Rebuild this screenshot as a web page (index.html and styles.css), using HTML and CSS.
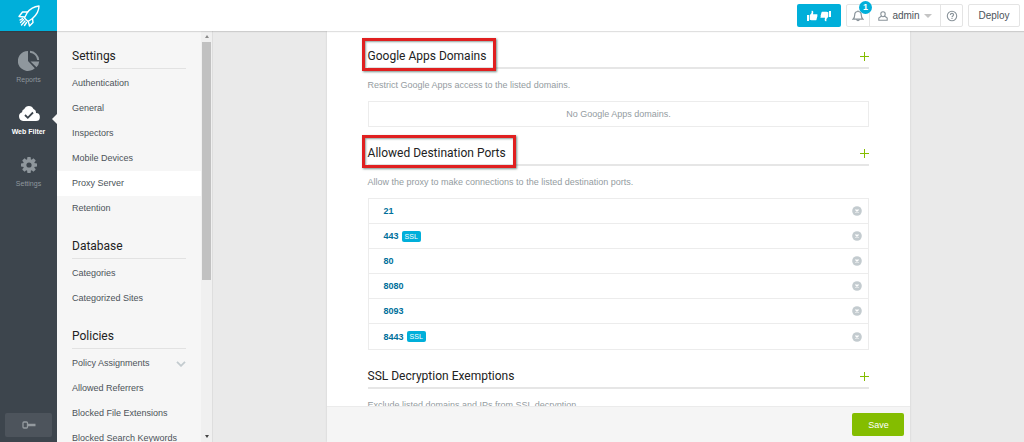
FILE: index.html
```html
<!DOCTYPE html>
<html lang="en">
<head>
  <meta charset="UTF-8">
  <title>Proxy Server</title>
  <link rel="stylesheet" href="styles.css">
</head>
<body>
  <header class="topbar">
    <a href="#" class="logo" aria-label="Home">
      <svg width="24" height="24" viewBox="0 0 24 24" fill="none" stroke="#fff" stroke-width="1.400" stroke-linejoin="round" stroke-linecap="round">
        <path d="M22 2C16 2.500 12.500 5.500 10 9l-2.500 5 3.500 3.500 4.500-3C19.500 11 22 8 22 2z"/>
        <path d="M10.500 8L5.500 8 2 12.500l5.500.5M15.500 14.500l.5 4-3.500 3.500-1.200-4.500"/>
        <path d="M6.500 15.500L3.500 18.500M8 17l-3.500 4M9.500 18.500L7.500 21.500M5.500 14.500L3 16"/>
      </svg>
    </a>
    <div class="tools">
      <button class="feedback" aria-label="Feedback">
        <svg width="12" height="12" viewBox="0 0 12 12" fill="#fff"><path d="M1 5h2v6H1zM3.700 5.200L5.600 3V.8c1.400-.5 2 .8 1.600 2.200L7 4.200h3.800c1 0 1 1.300.3 1.600.5.500.3 1.300-.2 1.500.4.600.1 1.200-.4 1.400.3.900-.2 1.600-1 1.600H5.500l-1.800-.6z"/></svg>
        <svg width="12" height="12" viewBox="0 0 12 12" fill="#fff"><path d="M11 7H9V1h2zM8.300 6.800L6.400 9v2.200c-1.400.5-2-.8-1.600-2.200L5 7.800H1.200c-1 0-1-1.300-.3-1.600-.5-.5-.3-1.300.2-1.500-.4-.6-.1-1.200.4-1.400-.3-.9.2-1.600 1-1.600h4l1.800.6z"/></svg>
      </button>
      <div class="group">
        <button class="bell" aria-label="Notifications">
          <svg width="12" height="12" viewBox="0 0 12 12" fill="none" stroke="#8a949b" stroke-width="1.200"><path d="M6 .5v1M1 9.200h10C9.500 8 9.300 7 9.300 5c0-2.200-1.300-3.500-3.300-3.500S2.700 2.800 2.700 5c0 2-.2 3-1.700 4.200zM4.700 9.500c.2 1.600 2.400 1.600 2.600 0"/></svg>
          <span class="badge">1</span>
        </button>
        <button class="user">
          <svg width="10" height="10" viewBox="0 0 10 10" fill="none" stroke="#8a949b" stroke-width="1.100"><path d="M5 .8c1.500 0 2.200 1 2.200 2.300S6.300 5.700 5 5.700 2.800 4.400 2.800 3.100 3.500.8 5 .8zM3.200 5.300L.8 7v2.200h8.400V7L6.800 5.300"/></svg>
          <span>admin</span>
          <span class="caret"></span>
        </button>
        <button class="help" aria-label="Help">
          <svg width="12" height="12" viewBox="0 0 12 12" fill="none" stroke="#8a949b" stroke-width="1.100"><circle cx="6" cy="6" r="4.700"/><path d="M4.400 4.900c0-2 3.200-2 3.200-.1C7.600 6 6 5.900 6 7.200M6 8v1"/></svg>
        </button>
      </div>
      <button class="deploy">Deploy</button>
    </div>
  </header>

  <div class="layout">
    <nav class="rail">
      <a href="#" class="rail-item">
        <svg width="22" height="22" viewBox="0 0 22 22" fill="#8f979d"><path d="M10 1a10 10 0 1 0 6.800 17.200L10 11z"/><path d="M12 .8A10 10 0 0 1 21.200 10h-2A8 8 0 0 0 12 2.800zM12.500 11.500h8.700a9 9 0 0 1-2.700 5.800z"/></svg>
        <span>Reports</span>
      </a>
      <a href="#" class="rail-item active">
        <svg width="22" height="22" viewBox="0 0 22 22"><path fill="#fff" d="M5 19a4.500 4.500 0 0 1-1-8.700A3.500 3.500 0 0 1 6.300 7 5 5 0 0 1 15.500 7a4 4 0 0 1 2.500 4 4 4 0 0 1-.3 8z"/><path fill="none" stroke="#3d454d" stroke-width="1.800" d="M7 13l2.800 2.800L15 10.500"/></svg>
        <span>Web Filter</span>
      </a>
      <a href="#" class="rail-item">
        <svg width="22" height="22" viewBox="0 0 22 22"><g fill="#8f979d"><rect x="9.200" y="3" width="3.600" height="16" rx=".8"/><rect x="9.200" y="3" width="3.600" height="16" rx=".8" transform="rotate(45 11 11)"/><rect x="9.200" y="3" width="3.600" height="16" rx=".8" transform="rotate(90 11 11)"/><rect x="9.200" y="3" width="3.600" height="16" rx=".8" transform="rotate(135 11 11)"/><circle cx="11" cy="11" r="6"/></g><circle cx="11" cy="11" r="2.600" fill="#3d454d"/></svg>
        <span>Settings</span>
      </a>
      <button class="key" aria-label="License key">
        <svg width="14" height="8" viewBox="0 0 14 8" fill="none" stroke="#949a9f" stroke-width="1.300"><rect x="1" y="1" width="4.500" height="6" rx="1"/><path stroke-width="2.500" d="M6 4h7.500"/></svg>
      </button>
    </nav>

    <aside class="sidebar">
      <div class="menu">
        <h3>Settings</h3>
        <ul>
          <li><a href="#">Authentication</a></li>
          <li><a href="#">General</a></li>
          <li><a href="#">Inspectors</a></li>
          <li><a href="#">Mobile Devices</a></li>
          <li><a href="#" class="current">Proxy Server</a></li>
          <li><a href="#">Retention</a></li>
        </ul>
        <h3>Database</h3>
        <ul>
          <li><a href="#">Categories</a></li>
          <li><a href="#">Categorized Sites</a></li>
        </ul>
        <h3>Policies</h3>
        <ul>
          <li><a href="#">Policy Assignments
            <svg width="10" height="6" viewBox="0 0 10 6" fill="none" stroke="#c3cbcf" stroke-width="1.800"><path d="M1 .8l4 4 4-4"/></svg></a></li>
          <li><a href="#">Allowed Referrers</a></li>
          <li><a href="#">Blocked File Extensions</a></li>
          <li><a href="#">Blocked Search Keywords</a></li>
        </ul>
      </div>
      <div class="scrollbar">
        <span class="up"></span>
        <span class="thumb"></span>
        <span class="down"></span>
      </div>
    </aside>

    <main class="main">
      <div class="panel">
        <div class="content">
          <section>
            <div class="title">
              <h2><span class="marked">Google Apps Domains</span></h2>
              <button class="add" aria-label="Add domain"></button>
            </div>
            <p>Restrict Google Apps access to the listed domains.</p>
            <div class="empty">No Google Apps domains.</div>
          </section>

          <section>
            <div class="title">
              <h2><span class="marked">Allowed Destination Ports</span></h2>
              <button class="add" aria-label="Add port"></button>
            </div>
            <p>Allow the proxy to make connections to the listed destination ports.</p>
            <ul class="ports">
              <li><a href="#">21</a><button class="remove" aria-label="Remove"><svg width="10" height="10" viewBox="0 0 10 10"><circle cx="5" cy="5" r="4.800" fill="#c3cbcf"/><path stroke="#fff" stroke-width="1.300" d="M3.500 3.500l3 3M6.500 3.500l-3 3"/></svg></button></li>
              <li><a href="#">443</a><span class="ssl">SSL</span><button class="remove" aria-label="Remove"><svg width="10" height="10" viewBox="0 0 10 10"><circle cx="5" cy="5" r="4.800" fill="#c3cbcf"/><path stroke="#fff" stroke-width="1.300" d="M3.500 3.500l3 3M6.500 3.500l-3 3"/></svg></button></li>
              <li><a href="#">80</a><button class="remove" aria-label="Remove"><svg width="10" height="10" viewBox="0 0 10 10"><circle cx="5" cy="5" r="4.800" fill="#c3cbcf"/><path stroke="#fff" stroke-width="1.300" d="M3.500 3.500l3 3M6.500 3.500l-3 3"/></svg></button></li>
              <li><a href="#">8080</a><button class="remove" aria-label="Remove"><svg width="10" height="10" viewBox="0 0 10 10"><circle cx="5" cy="5" r="4.800" fill="#c3cbcf"/><path stroke="#fff" stroke-width="1.300" d="M3.500 3.500l3 3M6.500 3.500l-3 3"/></svg></button></li>
              <li><a href="#">8093</a><button class="remove" aria-label="Remove"><svg width="10" height="10" viewBox="0 0 10 10"><circle cx="5" cy="5" r="4.800" fill="#c3cbcf"/><path stroke="#fff" stroke-width="1.300" d="M3.500 3.500l3 3M6.500 3.500l-3 3"/></svg></button></li>
              <li><a href="#">8443</a><span class="ssl">SSL</span><button class="remove" aria-label="Remove"><svg width="10" height="10" viewBox="0 0 10 10"><circle cx="5" cy="5" r="4.800" fill="#c3cbcf"/><path stroke="#fff" stroke-width="1.300" d="M3.500 3.500l3 3M6.500 3.500l-3 3"/></svg></button></li>
            </ul>
          </section>

          <section>
            <div class="title">
              <h2>SSL Decryption Exemptions</h2>
              <button class="add" aria-label="Add exemption"></button>
            </div>
            <p>Exclude listed domains and IPs from SSL decryption.</p>
          </section>
        </div>
        <footer class="actions">
          <button class="save">Save</button>
        </footer>
      </div>
    </main>
  </div>
</body>
</html>
```

FILE: styles.css
```css
* {
  box-sizing: border-box;
}

body {
  margin: 0;
  height: 100vh;
  display: flex;
  flex-direction: column;
  overflow: hidden;
  font-family: "Liberation Sans", Arial, sans-serif;
  font-size: 9px;
  color: #4c5359;
  background: #eaeaea;
}

h2, h3, p, ul {
  margin: 0;
  padding: 0;
}

ul {
  list-style: none;
}

a {
  color: inherit;
  text-decoration: none;
}

button {
  display: flex;
  align-items: center;
  justify-content: center;
  padding: 0;
  border: none;
  background: none;
  font: inherit;
  color: inherit;
  cursor: pointer;
}

/* top bar */
.topbar {
  position: relative;
  z-index: 2;
  display: flex;
  justify-content: space-between;
  flex-shrink: 0;
  height: 31px;
  background: #fff;
  box-shadow: 0 1px 1px rgba(0, 0, 0, 0.12);
}

.logo {
  display: flex;
  align-items: center;
  justify-content: center;
  width: 57px;
  height: 31px;
  background: #00afda;
}

.tools {
  display: flex;
  align-items: center;
  gap: 5px;
  padding-right: 4px;
  font-size: 10px;
}

.feedback {
  gap: 2px;
  width: 44px;
  height: 23px;
  border-radius: 2px;
  background: #00afda;
}

.group {
  display: flex;
  height: 23px;
  border: 1px solid #e4e4e4;
  border-radius: 2px;
}

.bell {
  position: relative;
  width: 22px;
}

.badge {
  position: absolute;
  top: -4px;
  right: -3px;
  width: 13px;
  border-radius: 7px;
  background: #00afda;
  color: #fff;
  font-size: 9px;
  font-weight: bold;
  line-height: 13px;
  text-align: center;
}

.user {
  gap: 4px;
  width: 72px;
  border-left: 1px solid #e4e4e4;
  border-right: 1px solid #e4e4e4;
}

.caret {
  border: 4px solid transparent;
  border-top-color: #c4c4c4;
  border-bottom: none;
}

.help {
  width: 21px;
}

.deploy {
  width: 52px;
  height: 23px;
  border: 1px solid #e4e4e4;
  border-radius: 2px;
}

.layout {
  display: flex;
  flex: 1;
  min-height: 0;
}

/* icon rail */
.rail {
  display: flex;
  flex-direction: column;
  align-items: center;
  width: 57px;
  padding: 19px 0 5px;
  background: #3d454d;
}

.rail-item {
  position: relative;
  display: flex;
  flex-direction: column;
  align-items: center;
  gap: 3px;
  width: 100%;
  height: 52px;
  font-size: 7px;
  line-height: 10px;
  color: #8f979d;
}

.rail-item.active {
  color: #fff;
  font-weight: bold;
}

.rail-item.active::after {
  content: "";
  position: absolute;
  top: 12px;
  right: 0;
  border: 5px solid transparent;
  border-right-color: #f6f6f6;
  border-left: none;
}

.key {
  width: 47px;
  height: 24px;
  margin-top: auto;
  border-radius: 2px;
  background: #4d545c;
}

/* settings menu */
.sidebar {
  display: flex;
  width: 156px;
  border-right: 1px solid #dedede;
  background: #f6f6f6;
}

.menu {
  flex: 1;
  overflow: hidden;
}

.menu h3 {
  margin: 15px 15px 2px;
  padding-bottom: 2px;
  border-bottom: 1px solid #e2e2e2;
  font-family: Roboto, sans-serif;
  font-size: 12px;
  font-weight: normal;
  line-height: 20px;
  color: #222;
}

.menu a {
  display: flex;
  align-items: center;
  justify-content: space-between;
  padding: 0 15px;
  line-height: 25px;
  white-space: nowrap;
}

.menu .current {
  background: #fff;
}

.scrollbar {
  display: flex;
  flex-direction: column;
  align-items: center;
  width: 11px;
  padding: 4px 0;
  background: #f0f0f0;
}

.up {
  margin-bottom: 4px;
  border: 2px solid transparent;
  border-bottom: 3px solid #8a8a8a;
  border-top: none;
}

.thumb {
  width: 9px;
  height: 59%;
  background: #c1c1c1;
}

.down {
  margin-top: auto;
  border: 2px solid transparent;
  border-top: 3px solid #444;
  border-bottom: none;
}

/* main panel */
.main {
  flex: 1;
  display: flex;
  justify-content: center;
}

.panel {
  display: flex;
  flex-direction: column;
  width: 72%;
  background: #fff;
  box-shadow: 0 0 2px rgba(0, 0, 0, 0.12);
}

.content {
  flex: 1;
  min-height: 0;
  overflow: hidden;
  padding: 15px 41px 0;
}

section {
  margin-bottom: 16px;
}

.title {
  display: flex;
  align-items: center;
  justify-content: space-between;
  padding-bottom: 1px;
  border-bottom: 2px solid #e6e6e6;
}

.title h2 {
  font-family: Roboto, sans-serif;
  font-size: 12px;
  font-weight: normal;
  line-height: 20px;
  color: #222;
}

/* red frame round a heading */
.marked {
  position: relative;
}

.marked::after {
  content: "";
  position: absolute;
  inset: -11px -10px -8px -6px;
  border: 3px solid #e02020;
  box-shadow: 1px 1px 2px rgba(30, 70, 60, 0.6), inset 1px 1px 2px rgba(30, 70, 60, 0.5);
}

.add {
  width: 9px;
  height: 9px;
  background:
    linear-gradient(#84bd00, #84bd00) center / 9px 1px no-repeat,
    linear-gradient(#84bd00, #84bd00) center / 1px 9px no-repeat;
}

section p {
  margin: 8px 0;
  line-height: 16px;
  color: #949c9f;
}

.empty {
  border: 1px solid #ececec;
  line-height: 24px;
  text-align: center;
  color: #949c9f;
}

.ports {
  border: 1px solid #ececec;
}

.ports li {
  display: flex;
  align-items: center;
  gap: 3px;
  height: 25px;
  padding: 0 6px 0 15px;
  border-bottom: 1px solid #ececec;
}

.ports li:last-child {
  border-bottom: none;
}

.ports a {
  font-weight: bold;
  color: #006f9b;
}

.ssl {
  padding: 0 3px;
  border-radius: 2px;
  background: #00afda;
  color: #fff;
  font-size: 7px;
  line-height: 11px;
}

.remove {
  margin-left: auto;
}

.actions {
  display: flex;
  align-items: center;
  justify-content: flex-end;
  height: 36px;
  padding-right: 6px;
  border-top: 1px solid #ebebeb;
  background: #f5f5f5;
}

.save {
  width: 52px;
  height: 23px;
  border-radius: 2px;
  background: #84bd00;
  color: #fff;
}
```
